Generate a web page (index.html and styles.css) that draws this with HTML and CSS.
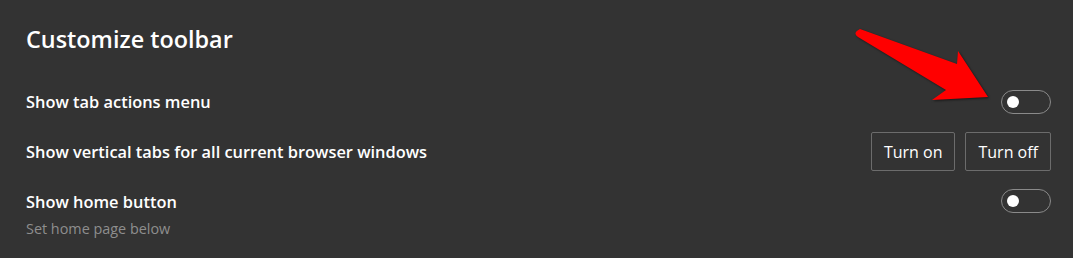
FILE: index.html
```html
<!DOCTYPE html>
<html lang="en">
<head>
<meta charset="utf-8">
<title>Customize toolbar</title>
<link rel="stylesheet" href="styles.css">
</head>
<body>
<div class="page">
  <h1 class="title">Customize toolbar</h1>
  <div class="rows">
    <div class="row">
      <span class="label">Show tab actions menu</span>
      <span class="toggle"><span class="knob"></span></span>
    </div>
    <div class="row">
      <span class="label">Show vertical tabs for all current browser windows</span>
      <div class="buttons">
        <button class="btn">Turn on</button>
        <button class="btn">Turn off</button>
      </div>
    </div>
    <div class="row row-top">
      <div class="text">
        <div class="label">Show home button</div>
        <div class="sub">Set home page below</div>
      </div>
      <span class="toggle"><span class="knob"></span></span>
    </div>
  </div>
  <svg class="arrow" viewBox="848 24 150 85" width="150" height="85" aria-hidden="true">
    <path d="M860 29 L957 64 L958 51 L988 97 L932 100 L946 90 L858 37 Q852 33 860 29 Z" fill="#ff0000"/>
  </svg>
</div>
</body>
</html>
```

FILE: styles.css
```css
html, body {
  margin: 0;
  padding: 0;
  background: #333333;
}

body {
  width: 1073px;
  height: 258px;
  overflow: hidden;
  font-family: "Open Sans", "Noto Sans", "Liberation Sans", sans-serif;
  color: #ffffff;
}

.page {
  position: relative;
  padding: 24px 22px 0 26px;
}

.title {
  margin: 0;
  font-size: 23.4px;
  line-height: 30px;
  font-weight: 600;
}

.rows {
  display: flex;
  flex-direction: column;
  gap: 18px;
  margin-top: 35px;
}

.row {
  display: flex;
  align-items: center;
  justify-content: space-between;
}

.row-top {
  align-items: flex-start;
}

.label {
  font-size: 16.4px;
  line-height: 24px;
  font-weight: 600;
  padding-top: 1px;
}

.row-top .label {
  padding-top: 0;
  line-height: 25px;
}

.sub {
  margin-top: 6px;
  font-size: 14.4px;
  line-height: 18px;
  color: #8e8e8e;
}

.toggle {
  box-sizing: border-box;
  width: 50px;
  height: 24px;
  border: 1px solid #8a8a8a;
  border-radius: 12px;
  display: flex;
  align-items: center;
  padding-left: 5px;
}

.knob {
  width: 12px;
  height: 12px;
  border-radius: 50%;
  background: #ffffff;
}

.buttons {
  display: flex;
  gap: 10px;
}

.btn {
  box-sizing: border-box;
  height: 39px;
  padding: 0 12px;
  background: transparent;
  border: 1px solid #6c6c6c;
  border-radius: 2px;
  color: #ffffff;
  font-family: inherit;
  font-size: 16px;
}

.arrow {
  position: absolute;
  left: 848px;
  top: 24px;
  filter: drop-shadow(1px 1px 1px rgba(0, 0, 0, 0.55));
}
```
